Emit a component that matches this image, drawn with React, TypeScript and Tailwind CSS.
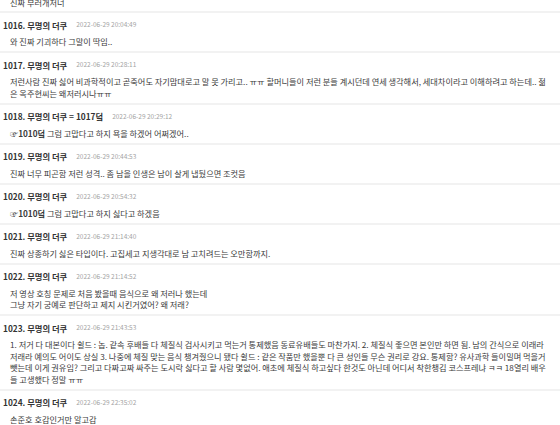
type Comment = {
  no: number;
  anchor?: string;
  date: string;
  lines: { ref?: string; text: string }[];
};

const comments: Comment[] = [
  { no: 1016, date: "2022-06-29 20:04:49", lines: [{ text: "와 진짜 기괴하다 그말이 딱임.." }] },
  {
    no: 1017,
    date: "2022-06-29 20:28:11",
    lines: [
      {
        text: "저런사람 진짜 싫어 비과학적이고 곧죽어도 자기맘대로고 말 못 가리고.. ㅠㅠ 할머니들이 저런 분들 계시던데 연세 생각해서, 세대차이라고 이해하려고 하는데.. 젊은 옥주현씨는 왜저러시나ㅠㅠ",
      },
    ],
  },
  {
    no: 1018,
    anchor: "1017덬",
    date: "2022-06-29 20:29:12",
    lines: [{ ref: "☞1010덬", text: " 그럼 고맙다고 하지 욕을 하겠어 어쩌겠어.." }],
  },
  {
    no: 1019,
    date: "2022-06-29 20:44:53",
    lines: [{ text: "진짜 너무 피곤함 저런 성격.. 좀 남을 인생은 남이 살게 냅뒀으면 조컷음" }],
  },
  {
    no: 1020,
    date: "2022-06-29 20:54:32",
    lines: [{ ref: "☞1010덬", text: " 그럼 고맙다고 하지 싫다고 하겠음" }],
  },
  {
    no: 1021,
    date: "2022-06-29 21:14:40",
    lines: [{ text: "진짜 상종하기 싫은 타입이다. 고집세고 지생각대로 남 고치려드는 오만함까지." }],
  },
  {
    no: 1022,
    date: "2022-06-29 21:14:52",
    lines: [
      { text: "저 영상 호칭 문제로 처음 봤을때 음식으로 왜 저러나 했는데" },
      { text: "그냥 자기 궁예로 판단하고 제지 시킨거였어? 왜 저래?" },
    ],
  },
  {
    no: 1023,
    date: "2022-06-29 21:43:53",
    lines: [
      {
        text: "1. 저거 다 대본이다 쉴드 : 놉. 같속 후배들 다 체질식 검사시키고 먹는거 통제했음 동료유배들도 마찬가지. 2. 체질식 좋으면 본인만 하면 됨. 남의 간식으로 이래라 저래라 예의도 어이도 상실 3. 나중에 체질 맞는 음식 챙겨줬으니 됐다 쉴드 : 같은 작품만 했을뿐 다 큰 성인들 무슨 권리로 강요. 통제함? 유사과학 들이밀며 먹을거 뺏는데 이게 권유임? 그리고 다짜고짜 싸주는 도시락 싫다고 할 사람 몇없어. 애초에 체질식 하고싶다 한것도 아닌데 어디서 착한챙김 코스프레냐 ㅋㅋ 18열리 배우들 고생했다 정말 ㅠㅠ",
      },
    ],
  },
  { no: 1024, date: "2022-06-29 22:35:02", lines: [{ text: "손준호 호감인거만 알고감" }] },
];

const font = { fontFamily: '"Noto Sans CJK KR", "Noto Sans", sans-serif' };

function Row({ c }: { c: Comment }) {
  return (
    <div className="border-b-2 border-[#f2f2f2] pt-[5px] pb-[3.5px]">
      <div className="flex h-[14px] items-center pl-[3px]">
        <span className="text-[8.3px] font-bold text-[#333]">
          {c.no}. 무명의 더쿠{c.anchor && <> = {c.anchor}</>}
        </span>
        <span className="ml-[9px] text-[6.5px] text-[#a3a3a3]">{c.date}</span>
      </div>
      <div className="mt-[4px] pl-[10px] pr-[12px] text-[8.2px] leading-[11.5px] text-[#3a3a3a]">
        {c.lines.map((l, i) => (
          <div key={i}>
            {l.ref && <span className="font-bold">{l.ref}</span>}
            {l.text}
          </div>
        ))}
      </div>
    </div>
  );
}

export default function App() {
  return (
    <div className="min-h-screen w-[560px] overflow-hidden bg-white" style={font}>
      <div className="border-b-2 border-[#f2f2f2] pb-[3px]">
        <div className="mt-[-4px] pl-[10px] text-[8.2px] leading-[12px] text-[#3a3a3a]">
          진짜 부러개저너
        </div>
      </div>
      {comments.map((c) => (
        <Row key={c.no} c={c} />
      ))}
    </div>
  );
}
